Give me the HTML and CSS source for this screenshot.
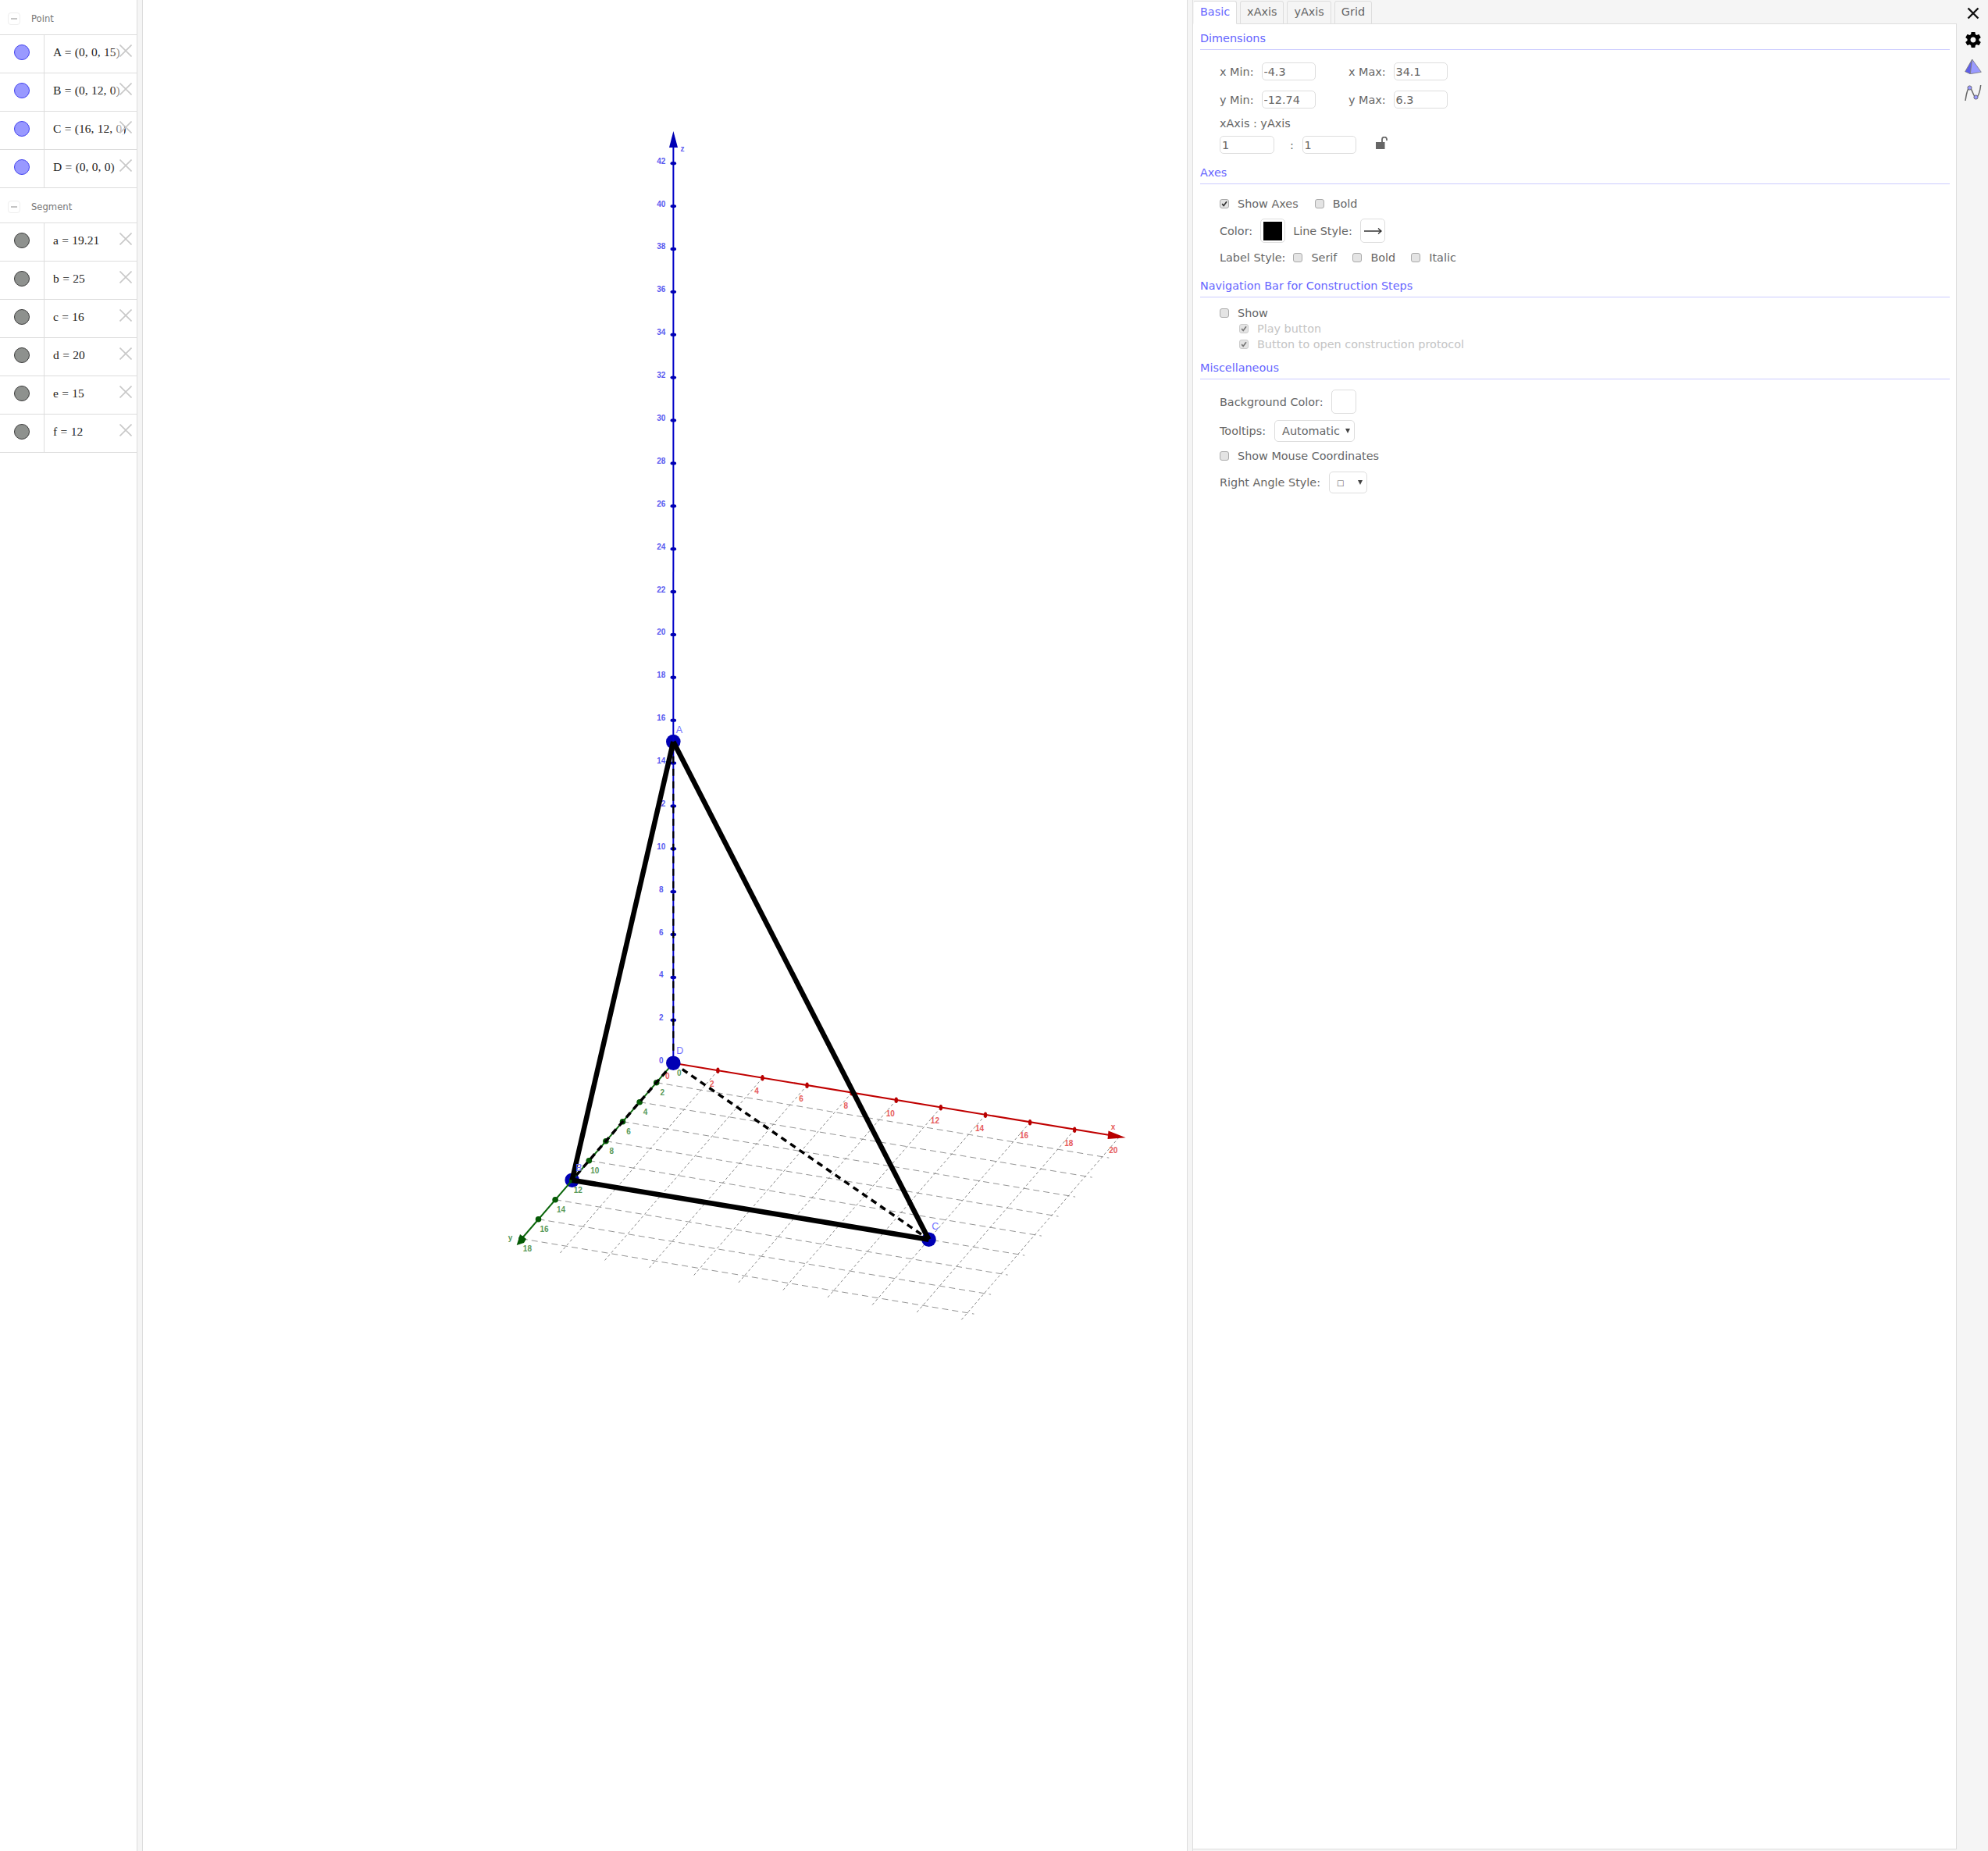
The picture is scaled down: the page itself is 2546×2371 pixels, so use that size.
FILE: index.html
```html
<!DOCTYPE html>
<html lang="en">
<head>
<meta charset="utf-8">
<title>GeoGebra 3D</title>
<link rel="stylesheet" href="styles.css">
</head>
<body>
<div class="app">
  <aside class="algebra">
    <div class="group-head"><span class="minus"><i></i></span><span>Point</span></div>
    <div class="item"><div class="marble-cell"><span class="marble point"></span></div><div class="value">A = (0, 0, 15)<svg class="del" viewBox="0 0 16 16"><path d="M0.5 0.5L15.5 15.5M15.5 0.5L0.5 15.5"/></svg></div></div>
    <div class="item"><div class="marble-cell"><span class="marble point"></span></div><div class="value">B = (0, 12, 0)<svg class="del" viewBox="0 0 16 16"><path d="M0.5 0.5L15.5 15.5M15.5 0.5L0.5 15.5"/></svg></div></div>
    <div class="item"><div class="marble-cell"><span class="marble point"></span></div><div class="value">C = (16, 12, 0)<svg class="del" viewBox="0 0 16 16"><path d="M0.5 0.5L15.5 15.5M15.5 0.5L0.5 15.5"/></svg></div></div>
    <div class="item"><div class="marble-cell"><span class="marble point"></span></div><div class="value">D = (0, 0, 0)<svg class="del" viewBox="0 0 16 16"><path d="M0.5 0.5L15.5 15.5M15.5 0.5L0.5 15.5"/></svg></div></div>
    <div class="group-head"><span class="minus"><i></i></span><span>Segment</span></div>
    <div class="item"><div class="marble-cell"><span class="marble seg"></span></div><div class="value">a = 19.21<svg class="del" viewBox="0 0 16 16"><path d="M0.5 0.5L15.5 15.5M15.5 0.5L0.5 15.5"/></svg></div></div>
    <div class="item"><div class="marble-cell"><span class="marble seg"></span></div><div class="value">b = 25<svg class="del" viewBox="0 0 16 16"><path d="M0.5 0.5L15.5 15.5M15.5 0.5L0.5 15.5"/></svg></div></div>
    <div class="item"><div class="marble-cell"><span class="marble seg"></span></div><div class="value">c = 16<svg class="del" viewBox="0 0 16 16"><path d="M0.5 0.5L15.5 15.5M15.5 0.5L0.5 15.5"/></svg></div></div>
    <div class="item"><div class="marble-cell"><span class="marble seg"></span></div><div class="value">d = 20<svg class="del" viewBox="0 0 16 16"><path d="M0.5 0.5L15.5 15.5M15.5 0.5L0.5 15.5"/></svg></div></div>
    <div class="item"><div class="marble-cell"><span class="marble seg"></span></div><div class="value">e = 15<svg class="del" viewBox="0 0 16 16"><path d="M0.5 0.5L15.5 15.5M15.5 0.5L0.5 15.5"/></svg></div></div>
    <div class="item"><div class="marble-cell"><span class="marble seg"></span></div><div class="value">f = 12<svg class="del" viewBox="0 0 16 16"><path d="M0.5 0.5L15.5 15.5M15.5 0.5L0.5 15.5"/></svg></div></div>
  </aside>
  <div class="splitter"></div>

  <main class="graphics">
    <svg id="scene" class="scene" viewBox="183 0 1337 2371" xmlns="http://www.w3.org/2000/svg"></svg>
  </main>
  <div class="splitter splitter-right"></div>

  <section class="props">
    <nav class="tabs">
      <span class="tab active">Basic</span>
      <span class="tab">xAxis</span>
      <span class="tab">yAxis</span>
      <span class="tab">Grid</span>
    </nav>
    <div class="panel">
      <h3 class="heading first">Dimensions</h3>
      <div class="row r-dim1"><span class="lab-min">x Min:</span><input class="num" value="-4.3"><span class="lab-max">x Max:</span><input class="num" value="34.1"></div>
      <div class="row r-dim2"><span class="lab-min">y Min:</span><input class="num" value="-12.74"><span class="lab-max">y Max:</span><input class="num" value="6.3"></div>
      <div class="row r-ratio-label"><span>xAxis : yAxis</span></div>
      <div class="row r-ratio"><input class="num" value="1"><span class="colon">:</span><input class="num" value="1">
        <svg class="lock" viewBox="0 0 16 16"><rect x="0" y="7" width="11.5" height="9"/><path d="M8 7V3.6a3 3 0 0 1 6 0V5"/></svg></div>

      <h3 class="heading h-axes">Axes</h3>
      <div class="row r-show gap21">
        <label class="chk"><span class="box on"><svg viewBox="0 0 12 12"><path d="M2.6 6.2L5 9L9.6 2.6"/></svg></span>Show Axes</label>
        <label class="chk"><span class="box"></span>Bold</label>
      </div>
      <div class="row r-color gap10">
        <span>Color:</span>
        <span class="swatch-btn"><span class="swatch"></span></span>
        <span>Line Style:</span>
        <span class="swatch-btn"><svg class="arrow-style" viewBox="0 0 24 12"><path d="M1 6H23M19 2.5L23 6L19 9.5"/></svg></span>
      </div>
      <div class="row r-label gap20">
        <span class="lab-style">Label Style:</span>
        <label class="chk"><span class="box"></span>Serif</label>
        <label class="chk"><span class="box"></span>Bold</label>
        <label class="chk"><span class="box"></span>Italic</label>
      </div>

      <h3 class="heading h-nav">Navigation Bar for Construction Steps</h3>
      <div class="row r-nav"><label class="chk"><span class="box"></span>Show</label></div>
      <div class="row r-sub"><label class="chk off"><span class="box on"><svg viewBox="0 0 12 12"><path d="M2.6 6.2L5 9L9.6 2.6"/></svg></span>Play button</label></div>
      <div class="row r-sub"><label class="chk off"><span class="box on"><svg viewBox="0 0 12 12"><path d="M2.6 6.2L5 9L9.6 2.6"/></svg></span>Button to open construction protocol</label></div>

      <h3 class="heading h-misc">Miscellaneous</h3>
      <div class="row r-bg gap10"><span>Background Color:</span><span class="swatch-btn"></span></div>
      <div class="row r-tip gap11"><span>Tooltips:</span><span class="select s-tip"><span>Automatic</span><i class="caret"></i></span></div>
      <div class="row r-mouse"><label class="chk"><span class="box"></span>Show Mouse Coordinates</label></div>
      <div class="row r-angle gap11"><span>Right Angle Style:</span><span class="select s-angle"><span class="sq">□</span><i class="caret"></i></span></div>
    </div>
  </section>

  <aside class="rail">
    <svg class="rail-icon i-close" viewBox="0 0 16 16"><path d="M1.5 1.5L14.5 14.5M14.5 1.5L1.5 14.5"/></svg>
    <svg class="rail-icon i-gear" viewBox="0 0 24 24"><path d="M19.43 12.98c.04-.32.07-.64.07-.98s-.03-.66-.07-.98l2.11-1.65c.19-.15.24-.42.12-.64l-2-3.46c-.12-.22-.39-.3-.61-.22l-2.49 1c-.52-.4-1.08-.73-1.69-.98l-.38-2.65C14.46 2.18 14.25 2 14 2h-4c-.25 0-.46.18-.49.42l-.38 2.65c-.61.25-1.17.59-1.69.98l-2.49-1c-.23-.09-.49 0-.61.22l-2 3.46c-.13.22-.07.49.12.64l2.11 1.65c-.04.32-.07.65-.07.98s.03.66.07.98l-2.11 1.65c-.19.15-.24.42-.12.64l2 3.46c.12.22.39.3.61.22l2.49-1c.52.4 1.08.73 1.69.98l.38 2.65c.03.24.24.42.49.42h4c.25 0 .46-.18.49-.42l.38-2.65c.61-.25 1.17-.59 1.69-.98l2.49 1c.23.09.49 0 .61-.22l2-3.46c.12-.22.07-.49-.12-.64l-2.11-1.65zM12 15.5c-1.93 0-3.5-1.57-3.5-3.5s1.57-3.5 3.5-3.5 3.5 1.57 3.5 3.5-1.57 3.5-3.5 3.5z"/></svg>
    <svg class="rail-icon i-pyr" viewBox="0 0 22 20"><path class="pf-l" d="M9.7 1L7.3 19.7L0.7 16.7Z"/><path class="pf-r" d="M9.7 1L21.3 17.3L7.3 19.7Z"/></svg>
    <svg class="rail-icon i-fn" viewBox="0 0 22 24"><path class="fn-line" d="M1 22C2 15 3.5 6 6.5 5C9 4.5 11.5 18 14.5 18C17.5 18 20 9 20.7 2"/><circle class="fn-dot" cx="6.5" cy="5.5" r="2.6"/><circle class="fn-dot" cx="14.5" cy="17.5" r="2.6"/></svg>
  </aside>
</div>
<script src="script.js"></script>
</body>
</html>
```

FILE: styles.css
```css
* { box-sizing: border-box; }
html, body { margin: 0; padding: 0; background: #fff; overflow: hidden; }
body { font-family: "DejaVu Sans", sans-serif; font-size: 14.4px; color: #666; }
.app { display: flex; width: 2546px; height: 2371px; }

/* algebra view */
.algebra { width: 176px; flex: none; border-right: 1px solid #ddd; background: #fff; }
.group-head { height: 45px; display: flex; align-items: center; border-bottom: 1px solid #ddd; padding: 3px 0 0 10px; font-size: 11.6px; color: #777; }
.minus { width: 16px; height: 16px; border: 1px solid #eee; border-radius: 4px; margin-right: 14px; display: flex; align-items: center; justify-content: center; }
.minus i { width: 8px; height: 2px; background: #c4c4c4; }
.item { height: 49px; display: flex; border-bottom: 1px solid #ddd; }
.marble-cell { width: 57px; flex: none; border-right: 1px solid #ddd; display: flex; align-items: center; justify-content: center; padding: 0 1px 4px 0; }
.marble { width: 20px; height: 20px; border-radius: 50%; border: 1px solid; }
.marble.point { background: #9999ff; border-color: #4343ee; }
.marble.seg { background: #8e918e; border-color: #3c3c3c; }
.value { flex: 1; position: relative; padding: 0 0 4px 11px; display: flex; align-items: center; font-family: "Liberation Serif", serif; font-size: 15.5px; word-spacing: .5px; color: #222; white-space: pre; overflow: hidden; }
.value::after { content: ""; position: absolute; top: 0; bottom: 0; left: 86px; width: 16px; background: linear-gradient(to right, rgba(255,255,255,0), rgba(255,255,255,.9)); }
.del { position: absolute; left: 96px; top: 12px; width: 16px; height: 16px; z-index: 1; }
.del path { fill: none; stroke: #c8c8c8; stroke-width: 1.6; }

.splitter { width: 7px; flex: none; background: #f5f5f5; border-right: 1px solid #ddd; }
.splitter-right { border-left: 1px solid #ddd; width: 8px; }

/* graphics */
.graphics { flex: none; width: 1337px; height: 100%; background: #fff; }
.scene { display: block; width: 1337px; height: 2371px; }
.grid-a { stroke: #888; stroke-width: .9; stroke-dasharray: 8 5; }
.grid-b { stroke: #777; stroke-width: .9; stroke-dasharray: 3.5 3; }
.axis-x { stroke: #c00000; stroke-width: 2; }
.axis-y { stroke: #0b660b; stroke-width: 2; }
.axis-z { stroke: #0000c8; stroke-width: 2; }
.tick-x, .head-x { fill: #b80000; }
.tick-y, .head-y { fill: #055a05; }
.tick-z, .head-z { fill: #0000b4; }
.solid { stroke: #000; stroke-width: 6.5; stroke-linecap: butt; }
.dash { stroke: #000; stroke-width: 3.5; stroke-dasharray: 8 6; }
.dash-z { stroke: #000; stroke-width: 2.2; stroke-dasharray: 9 7; }
.pt { fill: #0000b4; }
.num-label { font-family: "Liberation Sans", sans-serif; font-weight: 700; font-size: 10px; text-anchor: middle; dominant-baseline: central; }
.pt-label { font-family: "Liberation Sans", sans-serif; font-size: 12.5px; fill: #7070ff; text-anchor: middle; dominant-baseline: central; }
.lab-x { fill: #e65a5a; }
.lab-y { fill: #5a9a5a; }
.lab-z { fill: #5a5af0; }

/* properties */
.props { flex: none; width: 978px; display: flex; flex-direction: column; background: #f5f5f5; padding-bottom: 2px; }
.tabs { height: 31px; flex: none; display: flex; gap: 4px; padding-top: 1px; border-bottom: 1px solid #ddd; position: relative; }
.tab { height: 30px; padding: 0 8px; line-height: 26px; background: #f5f5f5; border: 1px solid #ddd; border-radius: 3px 3px 0 0; }
.tab.active { background: #fff; color: #6666ff; border-bottom-color: #fff; border-left-color: #f5f5f5; }
.panel { flex: 1; background: #fff; padding: 0 8px 0 34px; border-right: 1px solid #ddd; border-bottom: 1px solid #ddd; }
.heading { margin: 9px 0 0 -25px; font-weight: 400; font-size: 14.4px; line-height: 20px; padding: 1px 0 4px; border-bottom: 1px solid #ccf; color: #6666ff; }
.heading.first { margin-top: 7px; }
.h-axes { margin-top: 13px; }
.h-nav { margin-top: 15px; }
.h-misc { margin-top: 9px; }
.row { display: flex; align-items: center; line-height: 20px; }
.gap10 { gap: 10px; }
.gap11 { gap: 11px; }
.gap20 { gap: 20px; }
.gap21 { gap: 21px; }
.r-dim1 { margin-top: 16px; }
.r-dim2 { margin-top: 13px; }
.r-ratio-label { margin-top: 9px; }
.r-ratio { margin-top: 6px; }
.r-show { margin-top: 15px; }
.r-color { margin-top: 9px; }
.r-label { margin-top: 9px; }
.r-nav { margin-top: 10px; }
.r-sub { padding-left: 25px; }
.r-bg { margin-top: 13px; }
.r-tip { margin-top: 8px; }
.r-mouse { margin-top: 8px; }
.r-angle { margin-top: 10px; }
.lab-min { width: 53.5px; }
.lab-max { margin-left: 42px; width: 57.5px; }
.lab-style { margin-right: -10px; }
.colon { width: 36px; text-align: center; padding-left: 10px; }
.num { width: 69.5px; height: 23px; border: 1px solid #ddd; border-radius: 5px; padding: 0 2px; font: 14.4px "DejaVu Sans", sans-serif; color: #666; background: #fff; outline: none; }
.lock { width: 16px; height: 16px; margin-left: 25px; margin-top: -5px; }
.lock rect { fill: #666; }
.lock path { fill: none; stroke: #666; stroke-width: 1.8; }
.chk { display: flex; align-items: center; }
.box { width: 12px; height: 12px; border: 1px solid #aaa; border-radius: 3px; background: #e4e4e4; margin-right: 11px; flex: none; display: block; }
.box svg { display: block; width: 10px; height: 10px; }
.box path { fill: none; stroke: #333; stroke-width: 2; }
.chk.off { color: #c4c4c4; }
.chk.off .box { border-color: #ccc; }
.chk.off .box path { stroke: #777; }
.swatch-btn { width: 32px; height: 31px; border: 1px solid #ddd; border-radius: 5px; display: flex; align-items: center; justify-content: center; background: #fff; }
.swatch { width: 24px; height: 24px; background: #000; }
.arrow-style { width: 24px; height: 12px; }
.arrow-style path { fill: none; stroke: #333; stroke-width: 1.4; }
.select { height: 28px; border: 1px solid #ddd; border-radius: 5px; display: flex; align-items: center; position: relative; background: #fff; }
.s-tip { width: 103px; padding-left: 9px; }
.s-angle { width: 49px; padding-left: 9px; }
.sq { font-size: 10px; padding-top: 2px; }
.caret { position: absolute; right: 5px; top: 10px; width: 0; height: 0; border-left: 3px solid transparent; border-right: 3px solid transparent; border-top: 6px solid #444; }

/* right rail */
.rail { flex: 1; background: #f5f5f5; display: flex; flex-direction: column; align-items: center; position: relative; }
.rail-icon { display: block; flex: none; }
.i-close { width: 16px; height: 16px; margin-top: 9px; margin-left: 2px; }
.i-close path { fill: none; stroke: #111; stroke-width: 2.4; }
.i-gear { width: 24px; height: 24px; margin-top: 14px; margin-left: 2px; }
.i-pyr { width: 22px; height: 20px; margin-top: 12px; margin-left: 2px; }
.pf-l { fill: #5f5fe8; stroke: #777; stroke-width: .8; }
.pf-r { fill: #9a9aff; stroke: #777; stroke-width: .8; }
.i-fn { width: 22px; height: 24px; margin-top: 12px; margin-left: 2px; }
.fn-line { fill: none; stroke: #666; stroke-width: 1.5; }
.fn-dot { fill: #9a9aff; stroke: #555; stroke-width: .8; }
```

FILE: script.js
```js
// Draws the 3D scene from its world coordinates (an orthographic projection of x, y, z).
var O = [862.3, 1361.7], UX = [28.55, 4.75], UY = [-10.8, 12.5], UZ = 27.44;
function P(x, y, z) {
  return [O[0] + x * UX[0] + y * UY[0], O[1] + x * UX[1] + y * UY[1] - z * UZ];
}
var svg = document.getElementById('scene');
function el(name, attrs, text) {
  var n = document.createElementNS('http://www.w3.org/2000/svg', name);
  for (var k in attrs) n.setAttribute(k, attrs[k]);
  if (text !== undefined) n.textContent = text;
  svg.appendChild(n);
}
function line(a, b, cls) {
  el('line', { x1: a[0], y1: a[1], x2: b[0], y2: b[1], 'class': cls });
}
function label(p, dx, dy, t, cls) {
  el('text', { x: p[0] + dx, y: p[1] + dy, 'class': cls }, t);
}
var i;
for (i = 2; i <= 18; i += 2) line(P(0, i, 0), P(20.3, i, 0), 'grid-a');
for (i = 2; i <= 20; i += 2) line(P(i, 0, 0), P(i, 18.7, 0), 'grid-b');

var A = P(0, 0, 15), B = P(0, 12, 0), C = P(16, 12, 0), D = P(0, 0, 0);
[A, B, C].forEach(function (p) { el('circle', { cx: p[0], cy: p[1], r: 9.3, 'class': 'pt' }); });

line(D, [1424, 1454.6], 'axis-x');
line(D, [667, 1588], 'axis-y');
line(D, [862.4, 185], 'axis-z');
el('polygon', { points: '1419.5,1448.5 1441.7,1457.3 1418.5,1459', 'class': 'head-x' });
el('polygon', { points: '661.7,1595 666,1581 674,1587 671,1592', 'class': 'head-y' });
el('polygon', { points: '862.4,168 857,189 868,189', 'class': 'head-z' });

for (i = 2; i <= 18; i += 2) {
  var px = P(i, 0, 0);
  el('ellipse', { cx: px[0], cy: px[1], rx: 2.2, ry: 3.8, 'class': 'tick-x' });
  var py = P(0, i, 0);
  el('circle', { cx: py[0], cy: py[1], r: 3.8, 'class': 'tick-y' });
}
for (i = 2; i <= 42; i += 2) {
  var pz = P(0, 0, i);
  el('ellipse', { cx: pz[0], cy: pz[1], rx: 3.8, ry: 2.2, 'class': 'tick-z' });
}
for (i = 0; i <= 20; i += 2) label(P(i, 0, 0), -7.5, 17, i, 'num-label lab-x');
for (i = 0; i <= 18; i += 2) label(P(0, i, 0), 7.5, 12.5, i, 'num-label lab-y');
for (i = 0; i <= 42; i += 2) label(P(0, 0, i), -15.5, -3, i, 'num-label lab-z');
label([874, 190.5], 0, 0, 'z', 'num-label lab-z');
label([1425.5, 1443], 0, 0, 'x', 'num-label lab-x');
label([653.5, 1585], 0, 0, 'y', 'num-label lab-y');

line(D, A, 'dash-z');
line(D, B, 'dash');
line(D, C, 'dash');
line(A, B, 'solid');
line(A, C, 'solid');
line(B, C, 'solid');
el('circle', { cx: D[0], cy: D[1], r: 9.3, 'class': 'pt' });

label([870, 935], 0, 0, 'A', 'pt-label');
label([741.5, 1495.5], 0, 0, 'B', 'pt-label');
label([1197.7, 1570.7], 0, 0, 'C', 'pt-label');
label([870.7, 1345.7], 0, 0, 'D', 'pt-label');
```
